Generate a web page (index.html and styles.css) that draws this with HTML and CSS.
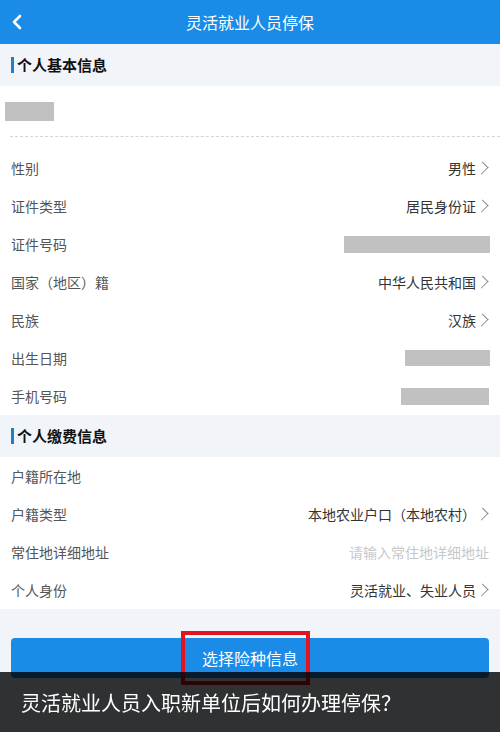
FILE: index.html
```html
<!DOCTYPE html>
<html lang="zh-CN">
<head>
  <meta charset="UTF-8" />
  <meta name="viewport" content="width=device-width, initial-scale=1.0"/>
  <title>灵活就业人员停保</title>
  <link rel="stylesheet" href="styles.css">
</head>
<body>
  <div class="page">
    <header class="topbar">
      <span class="back">
        <svg width="12" height="16" viewBox="0 0 12 16"><path d="M9 2 L3 8 L9 14" fill="none" stroke="#fff" stroke-width="2.6" stroke-linecap="round" stroke-linejoin="round"/></svg>
      </span>
      <h1>灵活就业人员停保</h1>
    </header>

    <div class="section-title"><span>个人基本信息</span></div>
    <div class="panel">
      <div class="name-row"><span class="mask name-mask"></span></div>
      <div class="dash"></div>
      <div class="row"><span class="label">性别</span><span class="value arrow">男性</span></div>
      <div class="row"><span class="label">证件类型</span><span class="value arrow">居民身份证</span></div>
      <div class="row"><span class="label">证件号码</span><span class="mask id-mask"></span></div>
      <div class="row"><span class="label">国家（地区）籍</span><span class="value arrow">中华人民共和国</span></div>
      <div class="row"><span class="label">民族</span><span class="value arrow">汉族</span></div>
      <div class="row"><span class="label">出生日期</span><span class="mask date-mask"></span></div>
      <div class="row"><span class="label">手机号码</span><span class="mask phone-mask"></span></div>
    </div>

    <div class="section-title"><span>个人缴费信息</span></div>
    <div class="panel">
      <div class="row"><span class="label">户籍所在地</span></div>
      <div class="row"><span class="label">户籍类型</span><span class="value arrow">本地农业户口（本地农村）</span></div>
      <div class="row"><span class="label">常住地详细地址</span><span class="value placeholder">请输入常住地详细地址</span></div>
      <div class="row"><span class="label">个人身份</span><span class="value arrow">灵活就业、失业人员</span></div>
    </div>

    <div class="actions">
      <button class="primary-btn">选择险种信息</button>
      <div class="highlight"></div>
    </div>
  </div>

  <div class="caption">灵活就业人员入职新单位后如何办理停保？</div>
</body>
</html>
```

FILE: styles.css
```css
body {
  margin: 0;
  font-family: "Noto Sans CJK SC", "Noto Sans", sans-serif;
  background-color: #f1f4f8;
  color: #333;
}
.page {
  width: 500px;
  height: 732px;
  overflow: hidden;
}
.topbar {
  height: 44px;
  background-color: #1a8ce7;
  display: flex;
  align-items: center;
  justify-content: center;
  position: relative;
}
.topbar h1 {
  margin: 0;
  font-size: 16px;
  font-weight: normal;
  color: #fff;
}
.back {
  position: absolute;
  left: 11px;
  top: 14px;
  display: flex;
}
.section-title {
  height: 42px;
  display: flex;
  align-items: center;
  padding-left: 11px;
}
.section-title span {
  border-left: 3px solid #1f7fc8;
  padding-left: 3px;
  font-size: 15px;
  font-weight: bold;
  color: #111;
  line-height: 16px;
}
.panel {
  background-color: #fff;
}
.name-row {
  padding: 16px 0 0 5px;
  height: 20px;
}
.mask {
  display: block;
  background-color: #c1c1c1;
}
.name-mask {
  width: 49px;
  height: 19px;
}
.dash {
  margin: 14px 0 0 10px;
  border-top: 1px dashed #d4d4d4;
  height: 12px;
}
.row {
  height: 38px;
  display: flex;
  align-items: center;
  justify-content: space-between;
  padding: 0 10px 0 11px;
}
.label {
  font-size: 14px;
  color: #555;
}
.value {
  font-size: 14px;
  color: #333;
  display: flex;
  align-items: center;
}
.value.arrow::after {
  content: "";
  width: 9px;
  height: 9px;
  border-top: 1.5px solid #8a8a8a;
  border-right: 1.5px solid #8a8a8a;
  transform: rotate(45deg) scaleX(0.85);
  margin: 0 3px 0 1px;
}
.placeholder {
  color: #c8c8c8;
  margin-right: 1px;
}
.id-mask {
  width: 146px;
  height: 17px;
}
.date-mask {
  width: 85px;
  height: 16px;
}
.phone-mask {
  width: 88px;
  height: 17px;
  margin-right: 1px;
}
.actions {
  padding: 29px 11px 0;
  position: relative;
}
.primary-btn {
  width: 100%;
  height: 40px;
  border: none;
  border-radius: 4px;
  background-color: #1a8ce7;
  color: #fff;
  font-family: inherit;
  font-size: 16px;
}
.highlight {
  position: absolute;
  left: 181px;
  top: 22px;
  width: 121px;
  height: 46px;
  border: 4px solid #e2141f;
}
.caption {
  position: fixed;
  left: 0;
  right: 0;
  bottom: 0;
  height: 60px;
  background-color: rgba(0, 0, 0, 0.8);
  color: #fff;
  font-size: 20px;
  display: flex;
  align-items: center;
  padding-left: 21px;
}
```
